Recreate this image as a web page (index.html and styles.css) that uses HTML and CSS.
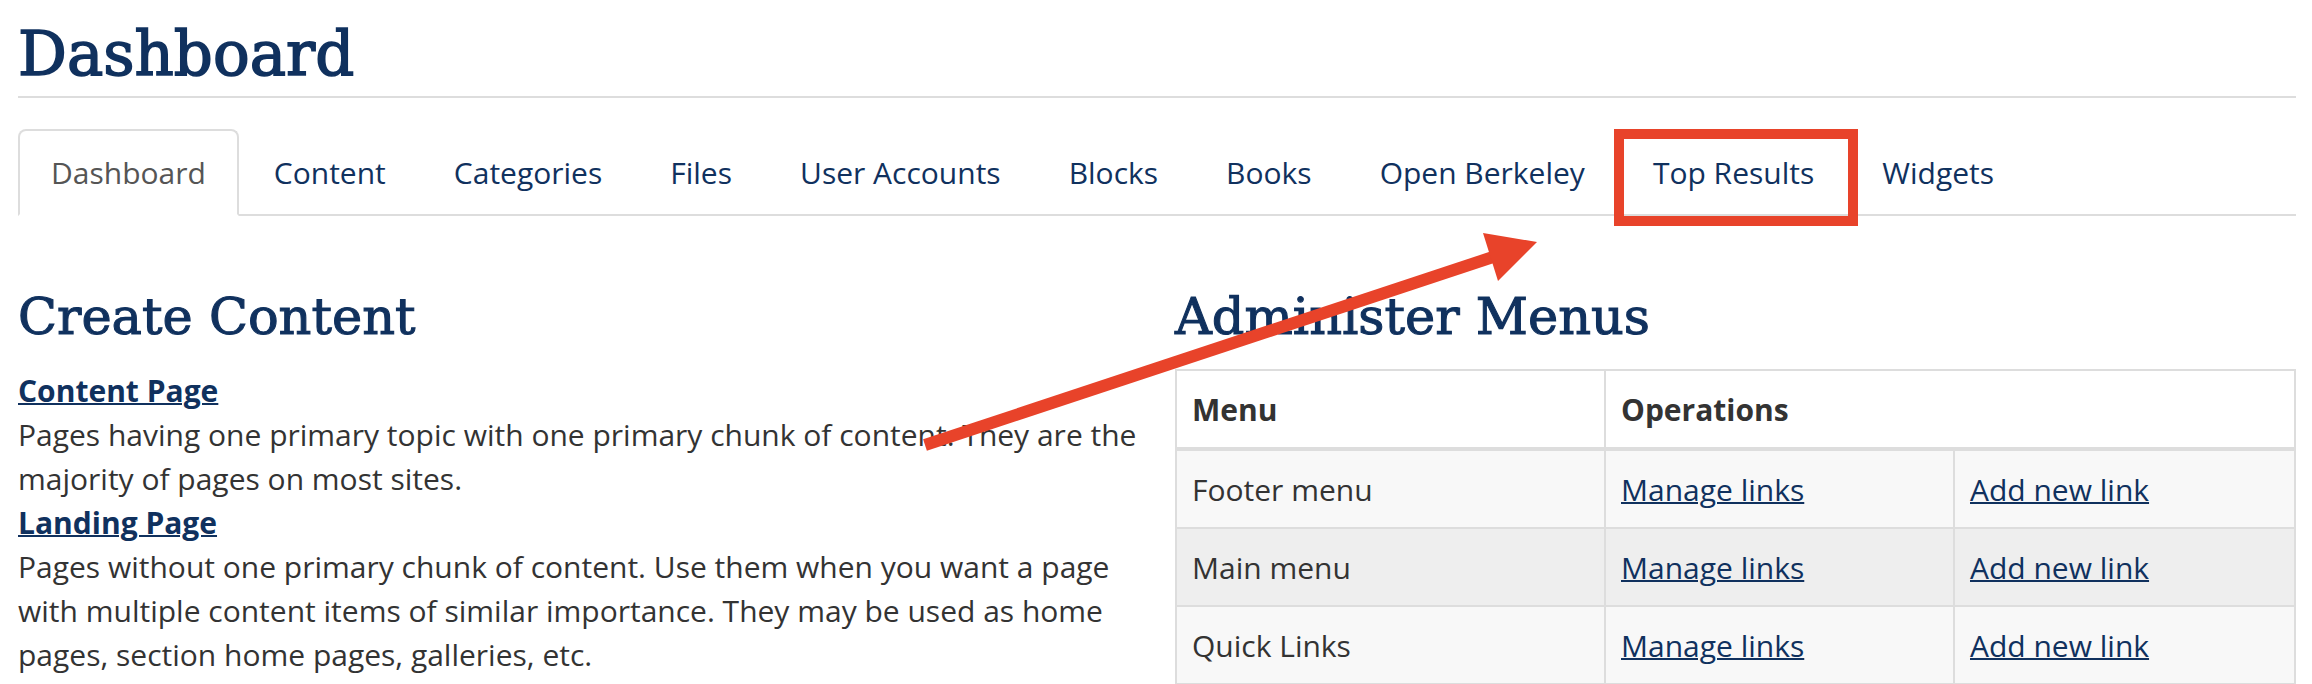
FILE: index.html
```html
<!DOCTYPE html>
<html lang="en">
<head>
<meta charset="utf-8">
<title>Dashboard</title>
<link rel="stylesheet" href="styles.css">
</head>
<body>
<div class="page">
  <h1 class="page-title">Dashboard</h1>
  <ul class="tabs">
    <li class="tab is-active"><a href="#">Dashboard</a></li>
    <li class="tab"><a href="#">Content</a></li>
    <li class="tab"><a href="#">Categories</a></li>
    <li class="tab"><a href="#">Files</a></li>
    <li class="tab"><a href="#">User Accounts</a></li>
    <li class="tab"><a href="#">Blocks</a></li>
    <li class="tab"><a href="#">Books</a></li>
    <li class="tab"><a href="#">Open Berkeley</a></li>
    <li class="tab"><a href="#">Top Results</a></li>
    <li class="tab"><a href="#">Widgets</a></li>
  </ul>
  <div class="columns">
    <section class="panel">
      <h2 class="panel-title">Create Content</h2>
      <dl class="node-types">
        <dt><a href="#">Content Page</a></dt>
        <dd>Pages having one primary topic with one primary chunk of content. They are the majority of pages on most sites.</dd>
        <dt><a href="#">Landing Page</a></dt>
        <dd>Pages without one primary chunk of content. Use them when you want a page with multiple content items of similar importance. They may be used as home pages, section home pages, galleries, etc.</dd>
      </dl>
    </section>
    <section class="panel">
      <h2 class="panel-title">Administer Menus</h2>
      <table class="menus">
        <colgroup>
          <col class="c-menu">
          <col class="c-op">
          <col class="c-op2">
        </colgroup>
        <thead>
          <tr><th>Menu</th><th colspan="2">Operations</th></tr>
        </thead>
        <tbody>
          <tr class="odd"><td>Footer menu</td><td><a href="#">Manage links</a></td><td><a href="#">Add new link</a></td></tr>
          <tr class="even"><td>Main menu</td><td><a href="#">Manage links</a></td><td><a href="#">Add new link</a></td></tr>
          <tr class="odd"><td>Quick Links</td><td><a href="#">Manage links</a></td><td><a href="#">Add new link</a></td></tr>
        </tbody>
      </table>
    </section>
  </div>
  <svg class="annotation" width="2312" height="684" viewBox="0 0 2312 684" aria-hidden="true">
    <rect x="1619" y="134" width="234" height="87" fill="none" stroke="#e8432a" stroke-width="10"/>
    <line x1="925" y1="445" x2="1496" y2="256" stroke="#e8432a" stroke-width="12"/>
    <polygon points="1537,242 1483,233 1498,281" fill="#e8432a"/>
  </svg>
</div>
</body>
</html>
```

FILE: styles.css
```css
html, body {
  margin: 0;
  padding: 0;
  background: #fff;
}

.page {
  position: relative;
  width: 2278px;
  padding: 0 16px 0 18px;
  font-family: "Open Sans", "Noto Sans", sans-serif;
  font-size: 30px;
  line-height: 44px;
  color: #333;
}

a {
  color: #10315e;
  text-decoration: underline;
  text-decoration-thickness: 2px;
}

.page-title {
  margin: 0;
  padding: 19px 0 7px;
  font-family: "DejaVu Serif", serif;
  font-weight: normal;
  font-size: 61px;
  line-height: 70px;
  color: #10315e;
  -webkit-text-stroke: 1.6px #10315e;
  border-bottom: 2px solid #ddd;
}

.tabs {
  display: flex;
  list-style: none;
  margin: 31px 0 0;
  padding: 0;
  border-bottom: 2px solid #ddd;
}

.tab {
  margin: 0 2px -2px 0;
}

.tab a {
  display: block;
  padding: 19px 31px;
  line-height: 45px;
  border: 2px solid transparent;
  border-radius: 8px 8px 0 0;
  text-decoration: none;
  color: #10315e;
}

.tab.is-active a {
  color: #555;
  background: #fff;
  border-color: #ddd #ddd #fff;
}

.columns {
  display: grid;
  grid-template-columns: 1127px 1121px;
  column-gap: 30px;
  margin-top: 72px;
}

.panel-title {
  margin: 0 0 23px;
  font-family: "DejaVu Serif", serif;
  font-weight: normal;
  font-size: 51px;
  line-height: 58px;
  color: #10315e;
  -webkit-text-stroke: 1.1px #10315e;
}

.node-types {
  margin: 0;
}

.node-types dt {
  font-weight: bold;
}

.node-types dd {
  margin: 0;
}

.menus {
  width: 100%;
  border-collapse: collapse;
  border: 2px solid #ddd;
  line-height: 45px;
}

.c-menu { width: 429px; }
.c-op { width: 349px; }

.menus th,
.menus td {
  text-align: left;
  padding: 16px 15px 15px;
  border: 2px solid #ddd;
}

.menus th {
  font-weight: bold;
  background: #fff;
  border-bottom-width: 4px;
}

.menus tr.odd td { background: #f8f8f8; }
.menus tr.even td { background: #eee; }

.annotation {
  position: absolute;
  left: 0;
  top: 0;
  pointer-events: none;
}
```
